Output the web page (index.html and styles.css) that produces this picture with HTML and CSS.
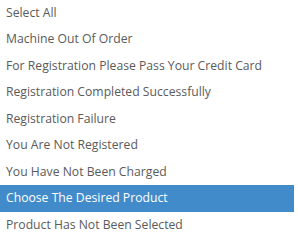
FILE: index.html
```html
<!DOCTYPE html>
<html lang="en">
<head>
    <meta charset="UTF-8">
    <meta name="viewport" content="width=device-width, initial-scale=1.0">
    <title>Message Select</title>
    <link rel="stylesheet" href="styles.css">
</head>
<body>
    <ul class="option-list">
        <li class="option">Select All</li>
        <li class="option">Machine Out Of Order</li>
        <li class="option">For Registration Please Pass Your Credit Card</li>
        <li class="option">Registration Completed Successfully</li>
        <li class="option">Registration Failure</li>
        <li class="option">You Are Not Registered</li>
        <li class="option">You Have Not Been Charged</li>
        <li class="option selected">Choose The Desired Product</li>
        <li class="option">Product Has Not Been Selected</li>
    </ul>
</body>
</html>
```

FILE: styles.css
```css
* {
    margin: 0;
    padding: 0;
    box-sizing: border-box;
}

body {
    font-family: "Open Sans", sans-serif;
    background: #fff;
    overflow: hidden;
}

.option-list {
    list-style: none;
    width: 294px;
    margin-top: -0.5px;
}

.option {
    height: 26.5px;
    line-height: 26.5px;
    padding-left: 6px;
    font-size: 12.2px;
    color: #5a5a5a;
    white-space: nowrap;
}

.option.selected {
    background-color: #428bca;
    color: #fff;
}
```
